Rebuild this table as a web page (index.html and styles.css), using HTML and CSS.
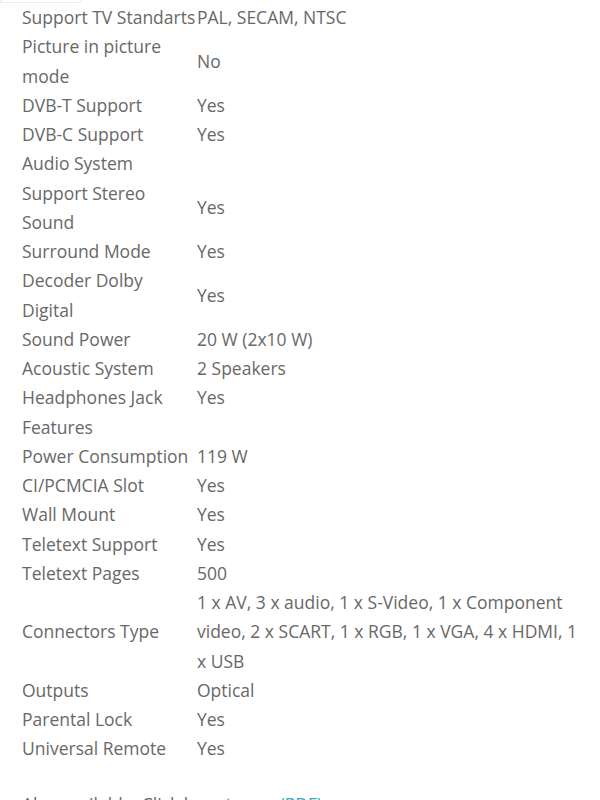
FILE: index.html
```html
<!DOCTYPE html>
<html>
<head>
<meta charset="utf-8">
<link rel="stylesheet" href="styles.css">
</head>
<body>
<div class="page">
  <div class="topbar"></div>
  <table class="specs">
    <tr><td class="k nw">Support TV Standarts</td><td class="v">PAL, SECAM, NTSC</td></tr>
    <tr><td class="k">Picture in picture mode</td><td class="v">No</td></tr>
    <tr><td class="k">DVB-T Support</td><td class="v">Yes</td></tr>
    <tr><td class="k">DVB-C Support</td><td class="v">Yes</td></tr>
    <tr><td class="k">Audio System</td><td class="v"></td></tr>
    <tr><td class="k">Support Stereo Sound</td><td class="v">Yes</td></tr>
    <tr><td class="k">Surround Mode</td><td class="v">Yes</td></tr>
    <tr><td class="k">Decoder Dolby Digital</td><td class="v">Yes</td></tr>
    <tr><td class="k">Sound Power</td><td class="v">20 W (2x10 W)</td></tr>
    <tr><td class="k">Acoustic System</td><td class="v">2 Speakers</td></tr>
    <tr><td class="k">Headphones Jack</td><td class="v">Yes</td></tr>
    <tr><td class="k">Features</td><td class="v"></td></tr>
    <tr><td class="k">Power Consumption</td><td class="v">119 W</td></tr>
    <tr><td class="k">CI/PCMCIA Slot</td><td class="v">Yes</td></tr>
    <tr><td class="k">Wall Mount</td><td class="v">Yes</td></tr>
    <tr><td class="k">Teletext Support</td><td class="v">Yes</td></tr>
    <tr><td class="k">Teletext Pages</td><td class="v">500</td></tr>
    <tr><td class="k">Connectors Type</td><td class="v">1 x AV, 3 x audio, 1 x S-Video, 1 x Component video, 2 x SCART, 1 x RGB, 1 x VGA, 4 x HDMI, 1 x USB</td></tr>
    <tr><td class="k">Outputs</td><td class="v">Optical</td></tr>
    <tr><td class="k">Parental Lock</td><td class="v">Yes</td></tr>
    <tr><td class="k">Universal Remote</td><td class="v">Yes</td></tr>
  </table>
  <p class="note">Also available: Click here to see <a href="#">(PDF)</a></p>
</div>
</body>
</html>
```
FILE: styles.css
```css
html, body {
  margin: 0;
  padding: 0;
  background: #ffffff;
}
.page {
  padding: 0 16px 0 22px;
  font-family: "Open Sans", "Noto Sans", sans-serif;
  font-size: 17.5px;
  line-height: 29.25px;
  color: #686868;
}
.topbar {
  margin-left: -22px;
  width: 80px;
  height: 2px;
  border: 1px solid #ececec;
  border-top: none;
  border-radius: 0 0 6px 0;
}
.specs {
  border-collapse: collapse;
  width: 558px;
  table-layout: fixed;
}
.specs td {
  padding: 0;
  vertical-align: middle;
}
.specs td.k {
  width: 171px;
  padding-right: 4px;
}
.specs td.nw {
  white-space: nowrap;
}
.note {
  margin: 26px 0 0;
}
.note a {
  color: #3aa7c4;
  text-decoration: none;
}
```
